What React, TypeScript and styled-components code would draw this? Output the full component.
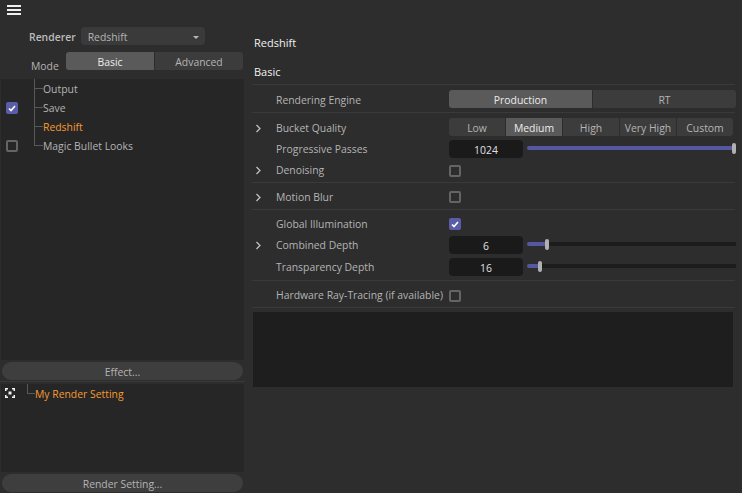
import styled, { createGlobalStyle } from 'styled-components';

const GlobalStyle = createGlobalStyle`
	html, body, #root {
		margin: 0;
		height: 100%;
		background: #2d2d2d;
		overflow: hidden;
	}
	* {
		box-sizing: border-box;
	}
	body {
		font-family: 'Open Sans', 'Noto Sans', sans-serif;
		font-size: 10.4px;
		color: #b4b4b4;
	}
`;

const Page = styled.div`
	display: flex;
	width: 742px;
	height: 493px;
`;

const Sidebar = styled.div`
	display: flex;
	flex-direction: column;
	flex-shrink: 0;
	width: 245px;
	height: 100%;
	padding-bottom: 1px;
`;

const MenuButton = styled.div`
	height: 27px;
	padding: 5px 0 0 7px;
	line-height: 0;
`;

const RendererRow = styled.div`
	display: flex;
	align-items: center;
	height: 18px;
	padding-left: 29px;
	gap: 5px;
`;

const BoldLabel = styled.span`
	padding-top: 2px;
	font-weight: 600;
	color: #bdbdbd;
`;

const Dropdown = styled.div`
	display: flex;
	align-items: center;
	justify-content: space-between;
	width: 124px;
	height: 18px;
	padding: 2px 6px 0 7px;
	background: #3a3a3a;
	border-radius: 4px;
`;

const Caret = styled.span`
	width: 0;
	height: 0;
	border-left: 3.5px solid transparent;
	border-right: 3.5px solid transparent;
	border-top: 3.5px solid #b8b8b8;
`;

const ModeRow = styled.div`
	display: flex;
	height: 18px;
	margin-top: 7px;
	padding-left: 31px;
`;

const ModeLabel = styled.span`
	width: 35px;
	padding-top: 6px;
	line-height: 16px;
`;

const Segments = styled.div<{ $width: number }>`
	display: flex;
	flex-shrink: 0;
	width: ${(p) => p.$width}px;
	height: 18px;
	gap: 1px;
	border-radius: 3px;
	overflow: hidden;
`;

const Segment = styled.div<{ $active?: boolean }>`
	flex: 1 1 0;
	display: flex;
	align-items: center;
	justify-content: center;
	padding-top: 2px;
	white-space: nowrap;
	background: ${(p) => (p.$active ? '#5a5a5a' : '#3c3c3c')};
	color: ${(p) => (p.$active ? '#ececec' : '#b4b4b4')};
`;

const TreePanel = styled.div`
	flex: 1;
	margin: 9px 1px 0;
	background: #262626;
`;

const TreeRow = styled.div`
	display: flex;
	align-items: stretch;
	height: 19px;
`;

const CheckCell = styled.div`
	display: flex;
	align-items: center;
	width: 33px;
	padding: 1px 0 0 5px;
`;

const Connector = styled.span<{ $last?: boolean }>`
	width: 9px;
	background:
		linear-gradient(#585858, #585858) left top / 1px ${(p) => (p.$last ? '50%' : '100%')} no-repeat,
		linear-gradient(#585858, #585858) left center / 100% 1px no-repeat;
`;

const TreeLabel = styled.span<{ $active?: boolean }>`
	padding-top: 1px;
	line-height: 19px;
	white-space: nowrap;
	color: ${(p) => (p.$active ? '#f59a32' : '#b4b4b4')};
`;

const Box = styled.span<{ $checked?: boolean }>`
	display: flex;
	align-items: center;
	justify-content: center;
	flex-shrink: 0;
	width: 12px;
	height: 12px;
	border-radius: 2px;
	border: ${(p) => (p.$checked ? 'none' : '2px solid #646464')};
	background: ${(p) => (p.$checked ? '#5a5ca8' : 'transparent')};
`;

const WideButton = styled.div`
	display: flex;
	align-items: center;
	justify-content: center;
	flex-shrink: 0;
	height: 18px;
	margin: 2px 2px 0;
	padding-top: 1px;
	border-radius: 9px;
	background: #3e3e3e;
`;

const Divider = styled.div`
	flex-shrink: 0;
	height: 1px;
	margin: 1px 0 2px;
	background: #3a3a3a;
`;

const SettingPanel = styled.div`
	display: flex;
	align-items: flex-start;
	flex-shrink: 0;
	height: 88px;
	margin: 0 1px;
	padding-left: 4px;
	background: #262626;
`;

const SettingIcon = styled.svg`
	flex-shrink: 0;
	margin-top: 4px;
`;

const SettingTree = styled.div`
	display: flex;
	height: 19px;
	margin-left: 12px;
`;

const SettingConnector = styled.span`
	width: 8px;
	height: 10px;
	border-left: 1px solid #585858;
	border-bottom: 1px solid #585858;
`;

const Content = styled.div`
	flex: 1;
	display: flex;
	flex-direction: column;
	min-width: 0;
	padding: 34px 7px 0;
`;

const Title = styled.div`
	height: 29px;
	padding-left: 2px;
	line-height: 18px;
	font-size: 11px;
	color: #f0f0f0;
`;

const SectionTitle = styled(Title)`
	height: 21px;
`;

const Group = styled.div<{ $height: number; $top: number }>`
	display: flex;
	flex-direction: column;
	height: ${(p) => p.$height}px;
	padding-top: ${(p) => p.$top}px;
	border-top: 1px solid #3a3a3a;
`;

const Row = styled.div<{ $height: number }>`
	display: flex;
	align-items: center;
	flex-shrink: 0;
	height: ${(p) => p.$height}px;
`;

const ChevronCell = styled.span<{ $nudge?: number }>`
	display: flex;
	align-items: center;
	flex-shrink: 0;
	width: 24px;
	margin-top: ${(p) => (p.$nudge ?? 0) * 2}px;
	padding-left: 3px;
`;

const RowLabel = styled.span<{ $nudge?: number }>`
	flex-shrink: 0;
	width: 173px;
	margin-top: ${(p) => (p.$nudge ?? 0) * 2}px;
	white-space: nowrap;
`;

const NumberField = styled.div`
	display: flex;
	align-items: center;
	justify-content: center;
	flex-shrink: 0;
	width: 74px;
	height: 18px;
	padding-top: 1px;
	border-radius: 4px;
	background: #1a1a1a;
	color: #e0e0e0;
`;

const Slider = styled.div`
	display: flex;
	align-items: center;
	flex-shrink: 0;
	width: 209px;
	height: 12px;
	margin: 0 0 2px 4px;
`;

const SliderFill = styled.span`
	height: 4px;
	border-radius: 2px 0 0 2px;
	background: #5558a0;
`;

const SliderThumb = styled.span`
	flex-shrink: 0;
	width: 4px;
	height: 11px;
	border-radius: 2px;
	background: #b0b0b0;
`;

const SliderRest = styled.span`
	flex: 1;
	height: 4px;
	background: #1c1c1c;
`;

const NoteBox = styled.div`
	height: 75px;
	margin: 4px 2px 0 1px;
	background: #1e1e1e;
`;

const Tick = () => (
	<svg width="8" height="7" viewBox="0 0 8 7">
		<path d="M1 3.5 3 5.5 7 1" fill="none" stroke="#fff" strokeWidth="1.6" />
	</svg>
);

const Chevron = () => (
	<svg width="7" height="9" viewBox="0 0 7 9">
		<path d="M1.5 1 5 4.5 1.5 8" fill="none" stroke="#c4c4c4" strokeWidth="1.2" />
	</svg>
);

const ValueSlider = ({ fill }: { fill: number }) => (
	<Slider>
		<SliderFill style={{ width: fill }} />
		<SliderThumb />
		<SliderRest />
	</Slider>
);

const treeItems = [
	{ name: 'Output' },
	{ name: 'Save', check: 'on' },
	{ name: 'Redshift', active: true },
	{ name: 'Magic Bullet Looks', check: 'off', last: true },
];

const App = () => (
	<Page>
		<GlobalStyle />
		<Sidebar>
			<MenuButton>
				<svg width="14" height="10" viewBox="0 0 14 10">
					<path d="M0 0h14v2H0zM0 4h14v2H0zM0 8h14v2H0z" fill="#f0f0f0" />
				</svg>
			</MenuButton>
			<RendererRow>
				<BoldLabel>Renderer</BoldLabel>
				<Dropdown>
					Redshift
					<Caret />
				</Dropdown>
			</RendererRow>
			<ModeRow>
				<ModeLabel>Mode</ModeLabel>
				<Segments $width={177}>
					<Segment $active>Basic</Segment>
					<Segment>Advanced</Segment>
				</Segments>
			</ModeRow>
			<TreePanel>
				{treeItems.map((item) => (
					<TreeRow key={item.name}>
						<CheckCell>
							{item.check && (
								<Box $checked={item.check === 'on'}>
									{item.check === 'on' && <Tick />}
								</Box>
							)}
						</CheckCell>
						<Connector $last={item.last} />
						<TreeLabel $active={item.active}>{item.name}</TreeLabel>
					</TreeRow>
				))}
			</TreePanel>
			<WideButton>Effect...</WideButton>
			<Divider />
			<SettingPanel>
				<SettingIcon width="10" height="10" viewBox="0 0 10 10">
					<path
						d="M0 0h3v1.5H1.5V3H0zM7 0h3v3H8.5V1.5H7zM0 7h1.5v1.5H3V10H0zM8.5 7H10v3H7V8.5h1.5zM3.5 3.5h3v3h-3z"
						fill="#f2f2f2"
					/>
				</SettingIcon>
				<SettingTree>
					<SettingConnector />
					<TreeLabel $active>My Render Setting</TreeLabel>
				</SettingTree>
			</SettingPanel>
			<WideButton>Render Setting...</WideButton>
		</Sidebar>
		<Content>
			<Title>Redshift</Title>
			<SectionTitle>Basic</SectionTitle>
			<Group $height={28} $top={5}>
				<Row $height={18}>
					<ChevronCell />
					<RowLabel $nudge={1}>Rendering Engine</RowLabel>
					<Segments $width={287}>
						<Segment $active>Production</Segment>
						<Segment>RT</Segment>
					</Segments>
				</Row>
			</Group>
			<Group $height={70} $top={4}>
				<Row $height={20}>
					<ChevronCell $nudge={1}>
						<Chevron />
					</ChevronCell>
					<RowLabel $nudge={1}>Bucket Quality</RowLabel>
					<Segments $width={284}>
						<Segment>Low</Segment>
						<Segment $active>Medium</Segment>
						<Segment>High</Segment>
						<Segment>Very High</Segment>
						<Segment>Custom</Segment>
					</Segments>
				</Row>
				<Row $height={24}>
					<ChevronCell />
					<RowLabel>Progressive Passes</RowLabel>
					<NumberField>1024</NumberField>
					<ValueSlider fill={205} />
				</Row>
				<Row $height={20}>
					<ChevronCell $nudge={-1}>
						<Chevron />
					</ChevronCell>
					<RowLabel $nudge={-1}>Denoising</RowLabel>
					<Box />
				</Row>
			</Group>
			<Group $height={27} $top={4}>
				<Row $height={20}>
					<ChevronCell>
						<Chevron />
					</ChevronCell>
					<RowLabel>Motion Blur</RowLabel>
					<Box />
				</Row>
			</Group>
			<Group $height={71} $top={4}>
				<Row $height={20}>
					<ChevronCell />
					<RowLabel>Global Illumination</RowLabel>
					<Box $checked>
						<Tick />
					</Box>
				</Row>
				<Row $height={22}>
					<ChevronCell>
						<Chevron />
					</ChevronCell>
					<RowLabel>Combined Depth</RowLabel>
					<NumberField>6</NumberField>
					<ValueSlider fill={18} />
				</Row>
				<Row $height={22}>
					<ChevronCell />
					<RowLabel>Transparency Depth</RowLabel>
					<NumberField>16</NumberField>
					<ValueSlider fill={11} />
				</Row>
			</Group>
			<Group $height={27} $top={5}>
				<Row $height={20}>
					<ChevronCell />
					<RowLabel $nudge={-1}>Hardware Ray-Tracing (if available)</RowLabel>
					<Box />
				</Row>
			</Group>
			<Group $height={1} $top={0} />
			<NoteBox />
		</Content>
	</Page>
);

export default App;
